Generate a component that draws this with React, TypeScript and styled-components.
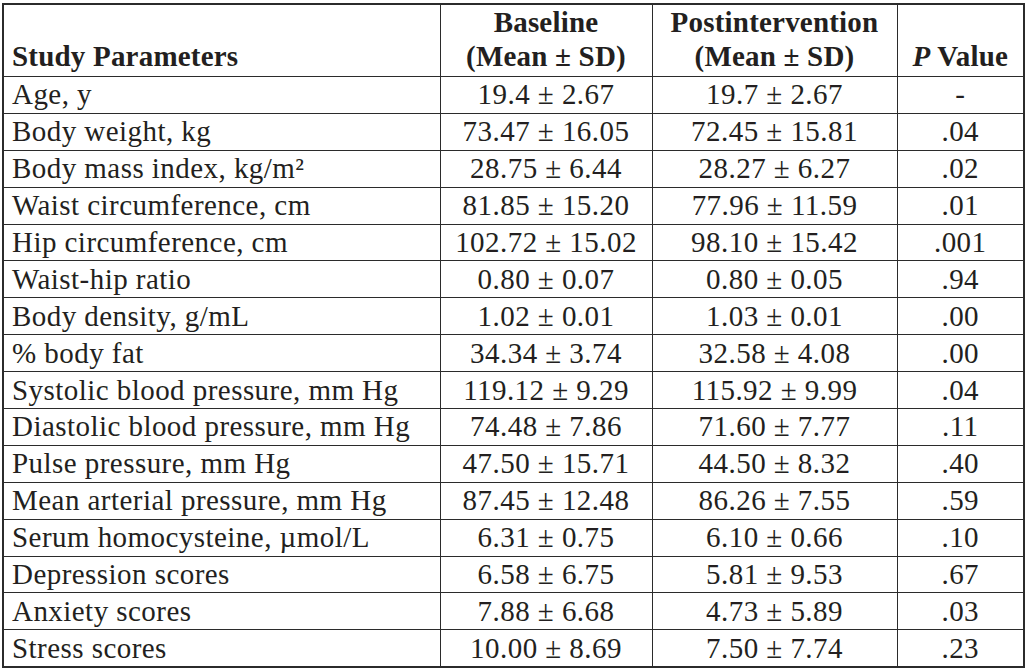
import React from 'react';
import styled, { createGlobalStyle } from 'styled-components';

const GlobalStyle = createGlobalStyle`
  html, body {
    margin: 0;
    padding: 0;
    background: #ffffff;
  }
  body {
    font-family: 'Liberation Serif', 'Times New Roman', serif;
    color: #231f20;
  }
`;

const Page = styled.div`
  padding: 3px 0 0 2px;
`;

const Table = styled.table`
  width: 1021px;
  border-collapse: collapse;
  border: 2px solid #2b2b2b;
  font-size: 29px;
  letter-spacing: 0.45px;
  table-layout: fixed;
`;

const HeadCell = styled.th<{ align?: 'left' | 'center' }>`
  height: 66px;
  padding: 0 8px 3px;
  text-align: ${(props) => props.align ?? 'center'};
  vertical-align: bottom;
  font-weight: 700;
  line-height: 34px;
  letter-spacing: 0.2px;
  border: 1.5px solid #2b2b2b;
  white-space: nowrap;
`;

const Row = styled.tr`
  height: 36.9px;
`;

const LabelCell = styled.td`
  padding: 0 8px;
  text-align: left;
  line-height: 33px;
  border: 1.5px solid #2b2b2b;
  white-space: nowrap;
`;

const ValueCell = styled(LabelCell)`
  text-align: center;
`;

const Italic = styled.i`
  font-style: italic;
`;

type Parameter = {
  label: string;
  baseline: string;
  post: string;
  p: string;
};

const rows: Parameter[] = [
  { label: 'Age, y', baseline: '19.4 ± 2.67', post: '19.7 ± 2.67', p: '-' },
  { label: 'Body weight, kg', baseline: '73.47 ± 16.05', post: '72.45 ± 15.81', p: '.04' },
  { label: 'Body mass index, kg/m²', baseline: '28.75 ± 6.44', post: '28.27 ± 6.27', p: '.02' },
  { label: 'Waist circumference, cm', baseline: '81.85 ± 15.20', post: '77.96 ± 11.59', p: '.01' },
  { label: 'Hip circumference, cm', baseline: '102.72 ± 15.02', post: '98.10 ± 15.42', p: '.001' },
  { label: 'Waist-hip ratio', baseline: '0.80 ± 0.07', post: '0.80 ± 0.05', p: '.94' },
  { label: 'Body density, g/mL', baseline: '1.02 ± 0.01', post: '1.03 ± 0.01', p: '.00' },
  { label: '% body fat', baseline: '34.34 ± 3.74', post: '32.58 ± 4.08', p: '.00' },
  { label: 'Systolic blood pressure, mm Hg', baseline: '119.12 ± 9.29', post: '115.92 ± 9.99', p: '.04' },
  { label: 'Diastolic blood pressure, mm Hg', baseline: '74.48 ± 7.86', post: '71.60 ± 7.77', p: '.11' },
  { label: 'Pulse pressure, mm Hg', baseline: '47.50 ± 15.71', post: '44.50 ± 8.32', p: '.40' },
  { label: 'Mean arterial pressure, mm Hg', baseline: '87.45 ± 12.48', post: '86.26 ± 7.55', p: '.59' },
  { label: 'Serum homocysteine, µmol/L', baseline: '6.31 ± 0.75', post: '6.10 ± 0.66', p: '.10' },
  { label: 'Depression scores', baseline: '6.58 ± 6.75', post: '5.81 ± 9.53', p: '.67' },
  { label: 'Anxiety scores', baseline: '7.88 ± 6.68', post: '4.73 ± 5.89', p: '.03' },
  { label: 'Stress scores', baseline: '10.00 ± 8.69', post: '7.50 ± 7.74', p: '.23' },
];

const App = () => {
  return (
    <Page>
      <GlobalStyle />
      <Table>
        <colgroup>
          <col style={{ width: '437px' }} />
          <col style={{ width: '212px' }} />
          <col style={{ width: '245px' }} />
          <col style={{ width: '127px' }} />
        </colgroup>
        <thead>
          <tr>
            <HeadCell align="left">Study Parameters</HeadCell>
            <HeadCell>
              Baseline
              <br />
              (Mean ± SD)
            </HeadCell>
            <HeadCell>
              Postintervention
              <br />
              (Mean ± SD)
            </HeadCell>
            <HeadCell>
              <Italic>P</Italic> Value
            </HeadCell>
          </tr>
        </thead>
        <tbody>
          {rows.map((row) => (
            <Row key={row.label}>
              <LabelCell>{row.label}</LabelCell>
              <ValueCell>{row.baseline}</ValueCell>
              <ValueCell>{row.post}</ValueCell>
              <ValueCell>{row.p}</ValueCell>
            </Row>
          ))}
        </tbody>
      </Table>
    </Page>
  );
};

export default App;
